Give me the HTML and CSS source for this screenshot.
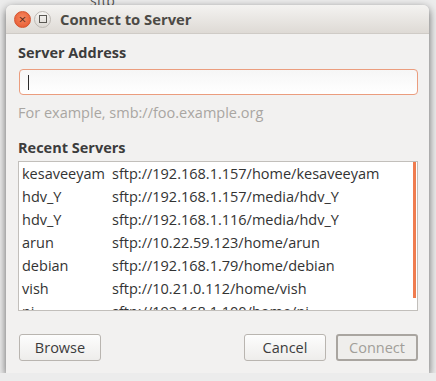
FILE: index.html
```html
<!DOCTYPE html>
<html lang="en">
<head>
    <meta charset="UTF-8">
    <title>Connect to Server</title>
    <link rel="stylesheet" href="styles.css">
</head>
<body>
    <span class="behind-text">sftp</span>

    <div class="window">
        <div class="titlebar">
            <span class="wm-btn wm-close">&#215;</span>
            <span class="wm-btn wm-max"><span class="wm-square"></span></span>
            <span class="title">Connect to Server</span>
        </div>

        <div class="content">
            <div class="label">Server Address</div>
            <div class="entry"><span class="caret"></span></div>
            <div class="hint">For example, smb://foo.example.org</div>

            <div class="label label-recent">Recent Servers</div>
            <div class="list">
                <div class="rows">
                    <div class="row"><span class="name">kesaveeyam</span><span>sftp://192.168.1.157/home/kesaveeyam</span></div>
                    <div class="row"><span class="name">hdv_Y</span><span>sftp://192.168.1.157/media/hdv_Y</span></div>
                    <div class="row"><span class="name">hdv_Y</span><span>sftp://192.168.1.116/media/hdv_Y</span></div>
                    <div class="row"><span class="name">arun</span><span>sftp://10.22.59.123/home/arun</span></div>
                    <div class="row"><span class="name">debian</span><span>sftp://192.168.1.79/home/debian</span></div>
                    <div class="row"><span class="name">vish</span><span>sftp://10.21.0.112/home/vish</span></div>
                    <div class="row"><span class="name">pi</span><span>sftp://192.168.1.100/home/pi</span></div>
                </div>
                <div class="scrollbar"></div>
            </div>

            <div class="buttons">
                <button class="btn">Browse</button>
                <div class="spacer"></div>
                <button class="btn">Cancel</button>
                <button class="btn btn-default" disabled>Connect</button>
            </div>
        </div>
    </div>
</body>
</html>
```

FILE: styles.css
```css
body {
    margin: 0;
    padding: 5px 0 0 6px;
    background-color: #ececec;
    font-family: 'Open Sans', 'DejaVu Sans', sans-serif;
    font-size: 14.5px;
    color: #3c3c3c;
    overflow: hidden;
}

/* le bout de texte de la fenêtre derrière */
.behind-text {
    position: absolute;
    top: -9px;
    left: 90px;
    font-size: 14px;
    color: #555;
}

.window {
    width: 423px;
    height: 368px;
    background-color: #f2f1f0;
    border-radius: 6px 6px 0 0;
    box-shadow: 0 3px 9px rgba(0, 0, 0, 0.6);
    position: relative;
}

.titlebar {
    height: 28px;
    display: flex;
    align-items: center;
    padding-left: 8px;
    background: linear-gradient(#f4f3f1, #dedad5);
    border-bottom: 1px solid #cfcbc6;
    border-radius: 6px 6px 0 0;
}

.wm-btn {
    width: 15px;
    height: 15px;
    border-radius: 50%;
    display: flex;
    align-items: center;
    justify-content: center;
    margin-right: 3px;
}

.wm-close {
    background: radial-gradient(circle at 50% 40%, #f68a63, #e5532a);
    border: 1px solid #d4542f;
    color: #5a2a1a;
    font-size: 13px;
    line-height: 1;
}

.wm-max {
    background: linear-gradient(#f7f6f4, #dcd8d3);
    border: 1px solid #bdb9b4;
}

.wm-square {
    width: 6px;
    height: 6px;
    border: 1px solid #5a5853;
}

.title {
    margin-left: 6px;
    font-weight: bold;
    font-size: 14.8px;
    color: #4c4a45;
}

.content {
    padding: 10px 11px 0 12px;
}

.label {
    font-weight: bold;
    height: 17px;
    line-height: 17px;
    color: #3c3c3c;
}

.entry {
    margin: 8px 0 0 1px;
    height: 24px;
    border: 1px solid #eb9d7e;
    border-radius: 4px;
    background: linear-gradient(#f6f6f6, #ffffff);
    display: flex;
    align-items: center;
    padding-left: 8px;
}

.caret {
    width: 1px;
    height: 15px;
    background-color: #2b2b2b;
}

.hint {
    margin-top: 9px;
    height: 17px;
    line-height: 17px;
    color: #a9a6a2;
}

.label-recent {
    margin-top: 18px;
}

.list {
    margin-top: 5px;
    height: 148px;
    border: 1px solid #c2bfbb;
    background-color: #fff;
    display: flex;
    overflow: hidden;
}

.rows {
    flex: 1;
    padding-left: 3px;
}

.row {
    display: flex;
    height: 23px;
    line-height: 23px;
    color: #333;
    white-space: nowrap;
}

.name {
    width: 90px;
}

.scrollbar {
    width: 3px;
    height: 136px;
    margin-right: 1px;
    background-color: #ef7c4f;
}

.buttons {
    display: flex;
    margin-top: 23px;
    padding-left: 1px;
    gap: 10px;
}

.spacer {
    flex: 1;
}

.btn {
    width: 82px;
    height: 27px;
    font-family: inherit;
    font-size: 14.5px;
    color: #3c3c3c;
    background: linear-gradient(#fdfdfd, #eeedeb);
    border: 1px solid #b9b5b0;
    border-radius: 3px;
    padding: 0;
}

.btn-default {
    border: 2px solid #a9a5a0;
    color: #a19e99;
    background: #efeeec;
}
```
